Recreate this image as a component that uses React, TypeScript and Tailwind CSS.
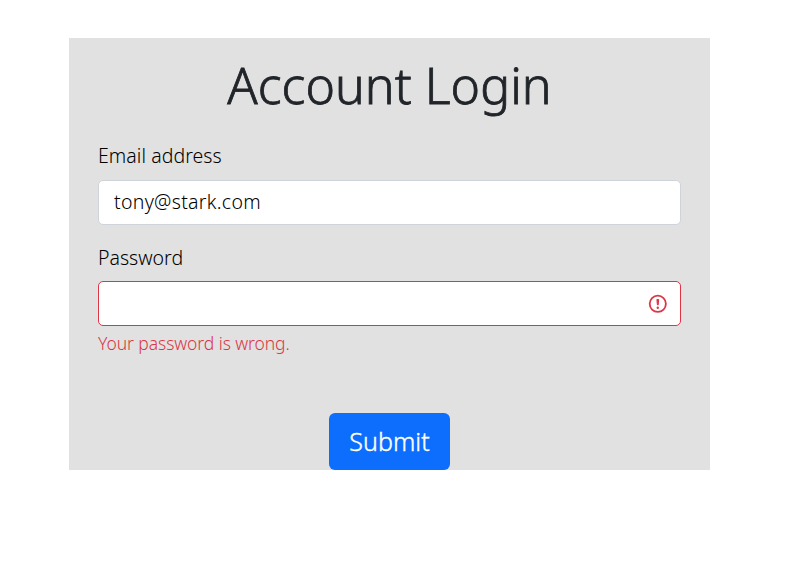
import React from "react";

function InvalidIcon() {
  return (
    <svg
      viewBox="0 0 20 20"
      className="h-5 w-5"
      fill="none"
      stroke="#dc3545"
      aria-hidden="true"
    >
      <circle cx="9.8" cy="9.8" r="8.1" strokeWidth="1.8" />
      <path strokeWidth="1" strokeLinejoin="round" fill="#dc3545" d="M8.9 5.5h1.8l-.5 5.4h-.8z" />
      <circle cx="9.8" cy="13.8" r="1.2" fill="#dc3545" stroke="none" />
    </svg>
  );
}

export default function App() {
  return (
    <main className="pt-[38px] pl-[69px] font-['Noto_Sans','Open_Sans',sans-serif] text-[#212529]">
      <form
        className="flex h-[432px] w-[641px] flex-col bg-[#e1e1e1] px-[29px]"
        onSubmit={(e) => e.preventDefault()}
      >
        <h1 className="mt-[17px] h-[60px] text-center text-[50px] leading-[60px] font-light tracking-[0.05px] whitespace-nowrap [-webkit-text-stroke:0.8px_#212529]">
          Account Login
        </h1>

        <label htmlFor="email" className="mt-[26px] h-[30px] self-start text-[19.5px] leading-[30px] font-light tracking-[0.06px] text-black">
          Email address
        </label>
        <input
          id="email"
          type="text"
          defaultValue="tony@stark.com"
          className="mt-[9px] h-[45px] w-full rounded-[5px] border border-[#ced4da] bg-white px-[15px] pb-[2px] text-[19.5px] font-light tracking-[0.3px] text-black outline-none"
        />

        <label htmlFor="password" className="mt-[18px] h-[30px] self-start text-[19.5px] leading-[30px] font-light text-black">
          Password
        </label>
        <div className="mt-[8px] flex h-[45px] items-center rounded-[5px] border border-[#dc3545] bg-white pr-[12px]">
          <input
            id="password"
            type="password"
            className="h-full min-w-0 flex-1 bg-transparent px-[15px] text-[20px] outline-none"
          />
          <InvalidIcon />
        </div>
        <p className="mt-[4px] h-[26px] self-start text-[17.5px] leading-[26px] font-light tracking-[-0.08px] text-[#dc3545]">
          Your password is wrong.
        </p>

        <button
          type="submit"
          className="mt-[57px] h-[57px] w-[121px] self-center rounded-[6px] bg-[#0d6efd] pb-[1px] text-[25px] leading-[38px] font-light tracking-[0.05px] text-white [-webkit-text-stroke:0.4px_white]"
        >
          Submit
        </button>
      </form>
    </main>
  );
}
